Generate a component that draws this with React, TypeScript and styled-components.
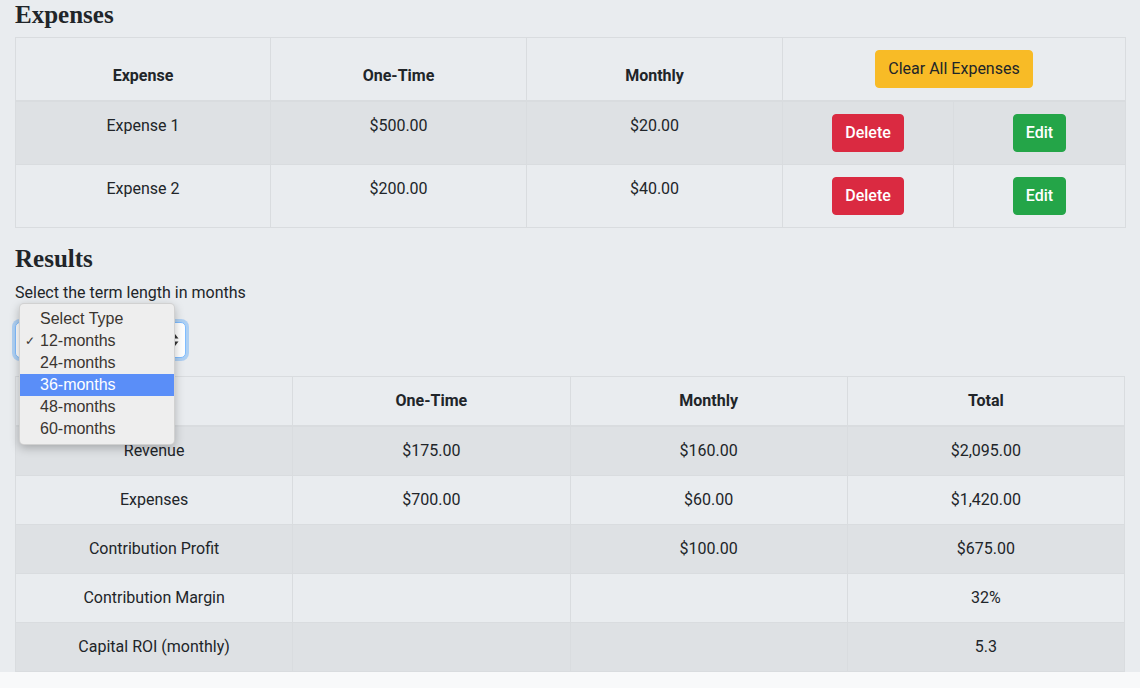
import React from "react";
import styled, { createGlobalStyle } from "styled-components";

const GlobalStyle = createGlobalStyle`
  html, body {
    margin: 0;
    padding: 0;
    background: #f8f9fa;
  }
  body {
    font-family: Roboto, "Liberation Sans", Arial, sans-serif;
    font-size: 16px;
    line-height: 24px;
    color: #212529;
  }
  * { box-sizing: border-box; }
`;

const Page = styled.div`
  background: #e9ecef;
  padding: 0 15px;
`;

const Heading = styled.h3`
  font-family: "Liberation Serif", "Times New Roman", serif;
  font-size: 25px;
  font-weight: bold;
  line-height: 30px;
  margin: 0 0 7px;
  color: #212529;
`;

const Table = styled.table<{ $last?: boolean }>`
  width: 100%;
  table-layout: fixed;
  border-collapse: collapse;
  border: 1px solid #d9dcdf;
  margin-bottom: ${(p) => (p.$last ? "0" : "16px")};
`;

const Th = styled.th`
  padding: 12px;
  border: 1px solid #d9dcdf;
  border-bottom-width: 2px;
  vertical-align: bottom;
  text-align: center;
  font-weight: 700;
`;

const Row = styled.tr<{ $striped?: boolean }>`
  background: ${(p) => (p.$striped ? "#dee1e4" : "transparent")};
`;

const Td = styled.td`
  padding: 12px;
  border: 1px solid #d9dcdf;
  vertical-align: top;
  text-align: center;
`;

const colors = {
  warning: { bg: "#f8bb26", fg: "#212529" },
  danger: { bg: "#da2a41", fg: "#ffffff" },
  success: { bg: "#24a548", fg: "#ffffff" },
};

const Button = styled.button<{ $variant: keyof typeof colors }>`
  display: inline-block;
  font-family: Roboto, "Liberation Sans", Arial, sans-serif;
  font-size: 16px;
  line-height: 24px;
  font-weight: ${(p) => (p.$variant === "warning" ? 400 : 500)};
  padding: 6px 12px;
  border: 1px solid ${(p) => colors[p.$variant].bg};
  border-radius: 4px;
  background: ${(p) => colors[p.$variant].bg};
  color: ${(p) => colors[p.$variant].fg};
  cursor: pointer;
`;

const Label = styled.label`
  display: block;
  margin-bottom: 8px;
`;

const SelectArea = styled.div`
  position: relative;
  width: 171px;
  margin: 17px 0 18px;
`;

const SelectBox = styled.div`
  height: 36px;
  border: 1px solid #80bdff;
  border-radius: 5px;
  box-shadow: 0 0 0 3px rgba(0, 123, 255, 0.25);
  background: #fff;
  display: flex;
  align-items: center;
  justify-content: space-between;
  padding: 0 6px 0 10px;
  font-size: 16px;
  color: #495057;
`;

const Menu = styled.div`
  position: absolute;
  left: 4px;
  top: -19px;
  width: 156px;
  padding: 4px 0;
  background: #eeeeee;
  border: 1px solid rgba(0, 0, 0, 0.12);
  border-radius: 5px;
  box-shadow: 0 3px 10px rgba(0, 0, 0, 0.25);
  font-family: "Liberation Sans", Arial, Helvetica, sans-serif;
  font-size: 16px;
  z-index: 10;
`;

const MenuItem = styled.div<{ $active?: boolean }>`
  display: flex;
  align-items: center;
  height: 22px;
  line-height: 22px;
  padding-left: 20px;
  position: relative;
  background: ${(p) => (p.$active ? "#5a8ef8" : "transparent")};
  color: ${(p) => (p.$active ? "#ffffff" : "#3a3530")};
`;

const Check = styled.span`
  position: absolute;
  left: 5px;
  top: 0;
  font-size: 12px;
`;

const expenses = [
  { name: "Expense 1", oneTime: "$500.00", monthly: "$20.00" },
  { name: "Expense 2", oneTime: "$200.00", monthly: "$40.00" },
];

const results = [
  { label: "Revenue", oneTime: "$175.00", monthly: "$160.00", total: "$2,095.00" },
  { label: "Expenses", oneTime: "$700.00", monthly: "$60.00", total: "$1,420.00" },
  { label: "Contribution Profit", oneTime: "", monthly: "$100.00", total: "$675.00" },
  { label: "Contribution Margin", oneTime: "", monthly: "", total: "32%" },
  { label: "Capital ROI (monthly)", oneTime: "", monthly: "", total: "5.3" },
];

const options = ["Select Type", "12-months", "24-months", "36-months", "48-months", "60-months"];

export default function App() {
  return (
    <>
      <GlobalStyle />
      <Page>
        <Heading>Expenses</Heading>
        <Table>
          <colgroup>
            <col style={{ width: 255 }} />
            <col style={{ width: 256 }} />
            <col style={{ width: 256 }} />
            <col style={{ width: 171 }} />
            <col style={{ width: 172 }} />
          </colgroup>
          <thead>
            <tr>
              <Th>Expense</Th>
              <Th>One-Time</Th>
              <Th>Monthly</Th>
              <Th colSpan={2}>
                <Button $variant="warning">Clear All Expenses</Button>
              </Th>
            </tr>
          </thead>
          <tbody>
            {expenses.map((e, i) => (
              <Row key={e.name} $striped={i % 2 === 0}>
                <Td>{e.name}</Td>
                <Td>{e.oneTime}</Td>
                <Td>{e.monthly}</Td>
                <Td>
                  <Button $variant="danger">Delete</Button>
                </Td>
                <Td>
                  <Button $variant="success">Edit</Button>
                </Td>
              </Row>
            ))}
          </tbody>
        </Table>

        <Heading>Results</Heading>
        <Label>Select the term length in months</Label>
        <SelectArea>
          <SelectBox>
            <span>12-months</span>
            <svg width="8" height="14" viewBox="0 0 8 14">
              <path d="M4 1 L7.5 5.5 H0.5 Z" fill="#333" />
              <path d="M4 13 L7.5 8.5 H0.5 Z" fill="#333" />
            </svg>
          </SelectBox>
          <Menu>
            {options.map((o) => (
              <MenuItem key={o} $active={o === "36-months"}>
                {o === "12-months" && <Check>✓</Check>}
                <span>{o}</span>
              </MenuItem>
            ))}
          </Menu>
        </SelectArea>

        <Table $last>
          <thead>
            <tr>
              <Th></Th>
              <Th>One-Time</Th>
              <Th>Monthly</Th>
              <Th>Total</Th>
            </tr>
          </thead>
          <tbody>
            {results.map((r, i) => (
              <Row key={r.label} $striped={i % 2 === 0}>
                <Td>{r.label}</Td>
                <Td>{r.oneTime}</Td>
                <Td>{r.monthly}</Td>
                <Td>{r.total}</Td>
              </Row>
            ))}
          </tbody>
        </Table>
      </Page>
    </>
  );
}
